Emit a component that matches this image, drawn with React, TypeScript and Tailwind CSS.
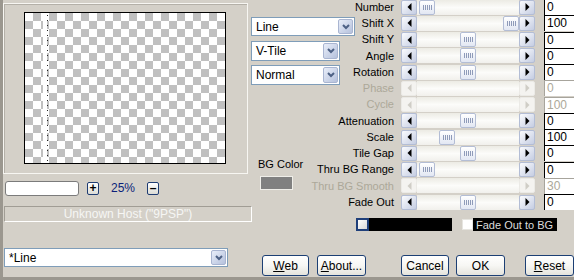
import React from "react";

type Param = { label: string; pos?: number; value: string; disabled?: boolean };

const PARAMS: Param[] = [
  { label: "Number", pos: 0.02, value: "0" },
  { label: "Shift X", pos: 1, value: "100" },
  { label: "Shift Y", pos: 0.5, value: "0" },
  { label: "Angle", pos: 0.5, value: "0" },
  { label: "Rotation", pos: 0.5, value: "0" },
  { label: "Phase", value: "0", disabled: true },
  { label: "Cycle", value: "100", disabled: true },
  { label: "Attenuation", pos: 0.5, value: "0" },
  { label: "Scale", pos: 0.25, value: "100" },
  { label: "Tile Gap", pos: 0.5, value: "0" },
  { label: "Thru BG Range", pos: 0.02, value: "0" },
  { label: "Thru BG Smooth", value: "30", disabled: true },
  { label: "Fade Out", pos: 0.5, value: "0" },
];

// track is 102px, thumb 16px
const TRAVEL = 86;

function ArrowBtn({ dir, disabled }: { dir: "left" | "right"; disabled?: boolean }) {
  return (
    <div
      className={
        disabled
          ? "flex h-full w-[16px] shrink-0 items-center justify-center rounded-[2px] border border-[#ebeae6] bg-[#f4f3f0]"
          : "flex h-full w-[16px] shrink-0 items-center justify-center rounded-[2px] border border-[#b3bdd5] bg-gradient-to-br from-[#fbfcfe] to-[#c5cde2]"
      }
    >
      <svg width="5" height="8" viewBox="0 0 5 8">
        <polygon
          points={dir === "left" ? "4.5,0 0.5,4 4.5,8" : "0.5,0 4.5,4 0.5,8"}
          fill={disabled ? "#cfcdc6" : "#000"}
        />
      </svg>
    </div>
  );
}

function Thumb({ pos }: { pos: number }) {
  return (
    <div
      className="flex h-full w-[16px] shrink-0 items-center justify-center rounded-[2px] border border-[#b3bdd5] bg-gradient-to-b from-[#ffffff] to-[#e2e7f3]"
      style={{ marginLeft: Math.round(pos * TRAVEL) }}
    >
      <svg width="9" height="5" viewBox="0 0 9 5">
        {[0, 2, 4, 6, 8].map((x) => (
          <rect key={x} x={x} y="0" width="1" height="5" fill="#8f9bb9" />
        ))}
      </svg>
    </div>
  );
}

function Slider({ pos, disabled }: { pos?: number; disabled?: boolean }) {
  return (
    <div className="ml-[7px] flex h-[15px] w-[134px] shrink-0">
      <ArrowBtn dir="left" disabled={disabled} />
      <div className="flex flex-1 bg-gradient-to-b from-[#ecebe4] via-[#fcfcfa] to-[#f1f0ec]">
        {!disabled && pos !== undefined && <Thumb pos={pos} />}
      </div>
      <ArrowBtn dir="right" disabled={disabled} />
    </div>
  );
}

function ComboBtn() {
  return (
    <div className="my-[1px] mr-[1px] flex w-[15px] shrink-0 items-center justify-center rounded-[2px] border border-[#a9b5d1] bg-gradient-to-br from-[#e9eef9] to-[#b5c1dc]">
      <svg width="8" height="6" viewBox="0 0 8 6">
        <polyline points="1,1 4,4 7,1" fill="none" stroke="#4d6185" strokeWidth="2" />
      </svg>
    </div>
  );
}

function Btn({ children, className }: { children: React.ReactNode; className: string }) {
  return (
    <div
      className={
        "flex h-[21px] items-center justify-center rounded-[3px] border border-[#1c3f74] bg-gradient-to-b from-[#ffffff] via-[#f7f7f4] to-[#e4e3dc] text-[12px] text-black " +
        className
      }
    >
      {children}
    </div>
  );
}

function SmallBtn({ children }: { children: React.ReactNode }) {
  return (
    <div className="flex h-[13px] w-[12px] items-center justify-center rounded-[2px] border border-[#1f3d73] bg-gradient-to-b from-[#ffffff] to-[#dcdcd6] text-[12px] leading-none font-bold text-black">
      {children}
    </div>
  );
}

export default function App() {
  return (
    <div className="flex h-[280px] w-[574px] overflow-hidden border-b-[3px] border-l-[3px] border-[#9b978f] bg-[#d4d0c8] font-['Liberation_Sans',Arial,sans-serif] text-[11px] text-black">
      {/* left column: preview + zoom + status + preset */}
      <div className="flex w-[248px] shrink-0 flex-col">
        <div className="mt-[3px] h-[171px] w-[245px] border border-[#f7f6f2] pl-[20px] pt-[8px] shadow-[inset_1px_1px_0_#b4b0a8]">
          <div className="relative h-[152px] w-[202px] border border-black bg-[conic-gradient(#c0c0c0_25%,#ffffff_0_50%,#c0c0c0_0_75%,#ffffff_0)] bg-[length:16px_16px]">
            <div className="absolute left-[18px] top-0 h-full w-[4px] bg-white" />
            <div className="absolute left-[22px] top-[2px] h-full w-[1px] bg-[repeating-linear-gradient(to_bottom,#222_0_1px,transparent_1px_5px)]" />
          </div>
        </div>

        <div className="mt-[5px] flex items-center">
          <div className="ml-[2px] h-[15px] w-[74px] rounded-[3px] border border-[#7b7b7b] bg-white" />
          <div className="ml-[8px]">
            <SmallBtn>+</SmallBtn>
          </div>
          <div className="w-[48px] text-center text-[12px] text-[#0b1f7a]">25%</div>
          <SmallBtn>–</SmallBtn>
        </div>

        <div className="mt-[9px] ml-[1px] flex h-[16px] w-[248px] items-center justify-center border border-t-[#a19d95] border-l-[#a19d95] border-b-white border-r-white text-[12px] text-[#f6f6f4]">
          Unknown Host ("9PSP")
        </div>

        <div className="mt-[26px] ml-[1px] flex h-[19px] w-[224px] border border-[#7f9db9] bg-white">
          <div className="flex flex-1 items-center pl-[4px] text-[12px]">*Line</div>
          <ComboBtn />
        </div>
      </div>

      {/* right part */}
      <div className="flex flex-1 flex-col">
        <div className="flex">
          {/* middle column */}
          <div className="flex w-[104px] shrink-0 flex-col text-[12px]">
            <div className="mt-[17px] flex h-[19px] w-[104px] border border-[#7f9db9] bg-white">
              <div className="flex flex-1 items-center pl-[4px]">Line</div>
              <ComboBtn />
            </div>
            <div className="mt-[5px] flex h-[20px] w-[89px] border border-[#7f9db9] bg-white">
              <div className="flex flex-1 items-center pl-[4px]">V-Tile</div>
              <ComboBtn />
            </div>
            <div className="mt-[4px] flex h-[20px] w-[89px] border border-[#7f9db9] bg-white">
              <div className="flex flex-1 items-center pl-[4px]">Normal</div>
              <ComboBtn />
            </div>
            <div className="mt-[73px] ml-[7px] h-[12px] text-[11px] leading-[12px]">BG Color</div>
            <div className="mt-[6px] ml-[9px] h-[14px] w-[33px] border border-[#efeee9] bg-[#808080]" />
          </div>

          {/* parameter rows */}
          <div className="-mt-[1px] flex w-[219px] shrink-0 flex-col">
            {PARAMS.map((p) => (
              <div key={p.label} className="flex h-[16.25px] items-center">
                <div
                  className={
                    p.disabled
                      ? "flex w-[39px] shrink-0 justify-end whitespace-nowrap text-[#aca899]"
                      : "flex w-[39px] shrink-0 justify-end whitespace-nowrap"
                  }
                >
                  {p.label}
                </div>
                <Slider pos={p.pos} disabled={p.disabled} />
                <div
                  className={
                    p.disabled
                      ? "ml-[9px] h-[16px] w-[30px] shrink-0 border-l border-t border-[#a7a49c] bg-white pl-[2px] text-[12px] leading-[15px] text-[#aca899]"
                      : "ml-[9px] h-[16px] w-[30px] shrink-0 border-l border-t border-black bg-white pl-[2px] text-[12px] leading-[15px]"
                  }
                >
                  {p.value}
                </div>
              </div>
            ))}
          </div>
        </div>

        {/* fade colour row */}
        <div className="mt-[8px] flex h-[13px] items-center">
          <div className="ml-[105px] h-[13px] w-[13px] border-2 border-[#1f3f7a] bg-gradient-to-br from-[#ffffff] to-[#d8d8d8]" />
          <div className="h-[13px] w-[83px] bg-black" />
          <div className="ml-[10px] h-[11px] w-[11px] border border-[#e6e5e0] bg-white" />
          <div className="flex h-[13px] w-[84px] items-center whitespace-nowrap bg-black pl-[3px] text-[11px] text-[#dcdcdc]">
            Fade Out to BG
          </div>
        </div>

        {/* buttons */}
        <div className="mt-[24px] flex">
          <Btn className="ml-[11px] w-[47px]">
            <span className="underline">W</span>eb
          </Btn>
          <Btn className="ml-[8px] w-[49px]">
            <span className="underline">A</span>bout...
          </Btn>
          <Btn className="ml-[35px] w-[48px]">Cancel</Btn>
          <Btn className="ml-[7px] w-[49px]">OK</Btn>
          <Btn className="ml-[20px] w-[49px]">
            <span className="underline">R</span>eset
          </Btn>
        </div>
      </div>
    </div>
  );
}
